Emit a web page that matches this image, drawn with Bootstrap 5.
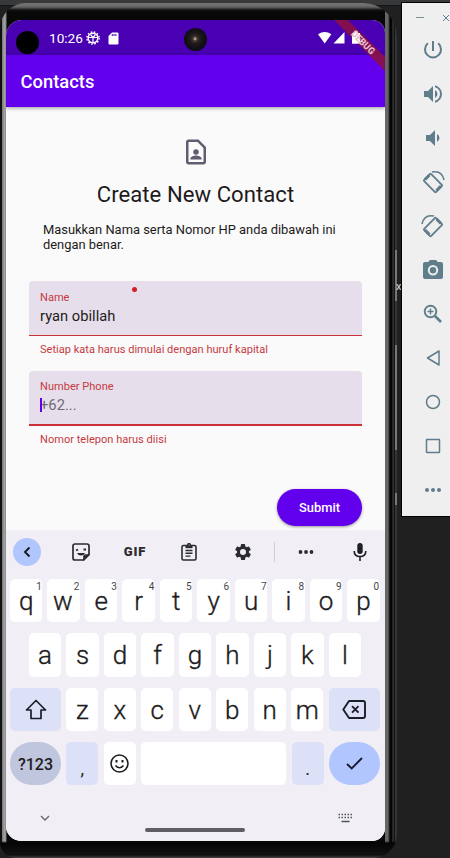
<!DOCTYPE html>
<html lang="id">
<head>
<meta charset="utf-8">
<meta name="viewport" content="width=device-width, initial-scale=1">
<title>Contacts</title>
<link href="https://cdn.jsdelivr.net/npm/bootstrap@5.3.0/dist/css/bootstrap.min.css" rel="stylesheet">
<style>
body{background:#202021;font-family:Roboto,"Liberation Sans",sans-serif;width:450px;height:858px;overflow:hidden;color:#1d1b20}
svg{display:block;flex:none}
.desk{height:858px;background:linear-gradient(#38393b 0 5px,#151515 5px 6px,#202021 6px)}
.phone{width:397px;height:855px;margin-top:3px;padding:17px 12px 17px 6px;border-radius:26px 34px 24px 16px;
 background:linear-gradient(#777 0,#646464 4px,#111 7px,transparent 9px),linear-gradient(0deg,#444 0,#111 3px,#050505 15px,transparent 17px),linear-gradient(90deg,#111 0 1.5px,#777 2px,#aaa 5px,#777 6px,#080808 7px 385px,#666 385px 388px,#333 389px,#050505 390px 392px,#444 393px,#151515 394px 395px,#555 396px,#111 397px)}
.screen{width:379px;height:821px;border-radius:16px 13px 13px 15px;background:#fafafa}
.statusbar{height:35px;background:#4800b2;color:#fff;padding:1px 0 0 10px;font-size:13.6px}
.lens{width:23px;height:23px;background:#000}
.clock{margin-left:10px;width:33px}
.status-end{width:25px}
.cam{left:178px;top:8px;width:23px;height:23px;background:radial-gradient(circle at 48% 47%,#a6988c 0 1px,#463832 2px,#201b1b 5px,#100d14 10px)}
.ribbon{top:0;right:0;width:54px;height:54px}
.appbar-top{height:52px;background:#6200ee;color:#fff;font-size:18.4px;font-weight:500;padding:2px 0 0 14.5px;box-shadow:0 1px 4px #0006}
.form-area{height:423px;padding:30px 23px 0}
.headline{font-size:22.1px;line-height:26px;margin-top:14px;letter-spacing:.05px}
.intro{font-size:12.9px;line-height:14.5px;margin:16px 0 0 14px}
.tfield{height:55px;background:#e6dfeb;border-radius:4px 4px 0 0;border-bottom:1px solid #cb2f38;padding:10px 11px 0}
.tfield-first{margin-top:29px}
.tfield-second{margin-top:15px;border-bottom-width:2px;padding-top:9px}
.flabel,.ferror{font-size:11.05px;line-height:13px;color:#c53a43;letter-spacing:.01px}
.fvalue{font-size:14.7px;line-height:18px;letter-spacing:.02px;margin-top:3px}
.ferror{padding:7px 11px 0}
.caret{width:2px;height:14px;background:#6200ee;margin-right:-2px;z-index:1}
.hint{color:#6f6975}
.reddot{left:103px;top:6px;width:5px;height:5px;background:#d11e28}
.submit-row{margin-top:43px}
.btn-submit,.btn-submit:hover{--bs-btn-padding-y:0;width:85px;height:37px;background:#6200ee;color:#fff;font-size:12.9px;font-weight:500;box-shadow:0 1px 3px #0006}
.kbd-area{height:311px;background:#f1eff5;padding:0 5px 0 4px}
.tools{height:43px;width:384px;margin-left:-10px}
.tool{flex:0 0 54px;display:flex;align-items:center;justify-content:center}
.tool-line{flex:0 0 1px;height:20px;margin-right:5px;background:#cfcdd4}
.tool-back{width:28px;height:28px;background:#b1c5ff}
.gif{font-size:13px;line-height:1;font-weight:900;letter-spacing:.8px;color:#2b2b30}
.keyrow{gap:5.2px;height:43.4px;margin-bottom:10.9px}
.keyrow-first{margin-top:6px}
.key{flex:0 0 32.3px;background:#fff;border-radius:5px;font-size:26px;font-weight:300;line-height:44.5px;text-align:center;-webkit-text-stroke:.35px #1d1b20}
.key sup{right:.5px;top:3px;font-size:10px;font-weight:400;line-height:1;color:#46464c;-webkit-text-stroke:0}
.key-w{padding-right:1.5px}
.key-wide{flex-basis:51px}
.key-tone{background:#dde1f8}
.key-num{background:#bfc6de;border-radius:22px;font-size:16px;font-weight:500;line-height:45px;-webkit-text-stroke:0}
.key-ok{background:#b1c5ff;border-radius:22px}
.key-low{font-size:18px;font-weight:400;line-height:53px;-webkit-text-stroke:0}
.navrow{padding:17px 27px 0 30px}
.homebar{width:100px;height:3.5px;background:#605e63;margin-top:5px}
.emu{width:49px;height:515px;margin:2px 0 0 4px;background:#efefef;border:solid #000;border-width:1px 0 1px 1px;color:#607d8b}
.emu-top{height:27px;padding:12px 0 0 14px;gap:18px}
.emu-list{gap:20px;padding:8px 0 0 19px}
.side-btn{left:395px;width:2px;background:#777}
.side-b1{top:250px;height:51px}
.side-b2{top:345px;height:105px}
.side-b3{top:493px;height:12px}
.side-x{left:396px;top:280px;font-size:11px;line-height:13px;width:5px;color:#ddd}
</style>
<script src="https://cdn.jsdelivr.net/npm/bootstrap@5.3.0/dist/js/bootstrap.bundle.min.js"></script>
</head>
<body>
<div class="desk d-flex align-items-start position-relative">
 <div class="phone flex-shrink-0">
  <div class="screen overflow-hidden d-flex flex-column position-relative">
   <div class="statusbar d-flex align-items-center">
    <div class="lens rounded-circle mt-2"></div>
    <span class="clock">10:26</span>
    <svg class="ms-1" width="14" height="14" viewBox="0 0 14 14" fill="none" stroke="#fff"><circle cx="7" cy="7" r="4.800" stroke-width="1.500"/><circle cx="7" cy="7" r="6.100" stroke-width="1.400" stroke-dasharray="1.600 1.600"/><path d="M2.500 6.500h9M7 6.500v5M4.500 3.500 7 6.500l2.500-3" stroke-width="1.200"/></svg>
    <svg class="ms-2" width="11" height="13" viewBox="0 0 11 13"><path d="M4 .5h5.500q1 0 1 1v10q0 1-1 1h-8q-1 0-1-1V4z" fill="#fff"/><path d="M4.300 2v2M6.100 2v2M7.900 2v2" stroke="#4800b2"/></svg>
    <svg class="ms-auto" width="42" height="14" viewBox="0 0 42 14" fill="#fff"><path d="M0 3.200Q6.700-1.400 13.400 3.200L6.700 12.500zM15.500 12.500 26.500 1v11.500zM34 2h2V.5h4V2h2v10.500h-8z"/></svg>
    <div class="status-end"></div>
   </div>
   <div class="cam rounded-circle position-absolute"></div>
   <div class="appbar-top d-flex align-items-center">Contacts</div>
   <svg class="ribbon position-absolute" viewBox="0 0 54 54"><path d="M3 0h14l37 37v14z" fill="#8b1145" fill-opacity=".9"/><path d="M21 13h2V11.500h4V13h2v10.500h-8z" fill="#fff"/><text transform="translate(19.500 14.500) rotate(45)" font-size="9.600" font-weight="900" fill="#e3bccb" textLength="29" lengthAdjust="spacingAndGlyphs">DEBUG</text></svg>

   <div class="form-area">
    <svg class="mx-auto" width="30" height="30" viewBox="0 0 24 24" fill="#625b71"><path d="M14 2H6c-1.100 0-2 .9-2 2v16c0 1.100.9 2 2 2h12c1.100 0 2-.9 2-2V8zm4 18H6V4h7.200L18 8.800z"/><circle cx="12" cy="12" r="2.200"/><path d="M7.500 18v-.7c0-1.800 3-2.500 4.500-2.500s4.500.7 4.500 2.500v.7z"/></svg>
    <div class="headline text-center">Create New Contact</div>
    <p class="intro">Masukkan Nama serta Nomor HP anda dibawah ini<br>dengan benar.</p>
    <div class="tfield tfield-first position-relative">
     <div class="flabel">Name</div><div class="fvalue">ryan obillah</div>
     <span class="reddot rounded-circle position-absolute"></span>
    </div>
    <div class="ferror">Setiap kata harus dimulai dengan huruf kapital</div>
    <div class="tfield tfield-second">
     <div class="flabel">Number Phone</div><div class="fvalue hint d-flex align-items-center"><span class="caret"></span>+62...</div>
    </div>
    <div class="ferror">Nomor telepon harus diisi</div>
    <div class="submit-row d-flex justify-content-end"><button class="btn btn-submit rounded-pill" type="button">Submit</button></div>
   </div>

   <div class="kbd-area position-relative flex-shrink-0">
    <div class="tools d-flex align-items-center">
     <div class="tool"><div class="tool-back rounded-circle d-flex align-items-center justify-content-center"><svg width="8" height="12" viewBox="0 0 8 12" fill="none" stroke="#1b1b25" stroke-width="2"><path d="M6.500 1.500 2 6l4.500 4.500"/></svg></div></div>
     <div class="tool"><svg width="18" height="18" viewBox="0 0 18 18" fill="none" stroke="#2b2b30" stroke-width="1.700"><path d="M3 1h12q2 0 2 2v8.500L11.500 17H3q-2 0-2-2V3q0-2 2-2z"/><path d="M16.500 12H14q-2 0-2 2v2.500z" fill="#2b2b30"/><path d="M4 7.500l2-1M11.500 6.500h2.500" stroke-width="1.800"/><path d="M5 10h8q-1 2.600-4 2.600T5 10z" fill="#2b2b30" stroke="none"/></svg></div>
     <div class="tool gif">GIF</div>
     <div class="tool"><svg width="16" height="18" viewBox="0 0 16 18" fill="none" stroke="#2b2b30" stroke-width="1.600"><rect x="1" y="2.500" width="14" height="14.500" rx="1.500"/><path d="M4.500 7.500h7M4.500 10.300h7M4.500 13.100h5" stroke-width="1.400"/><path d="M4.500 2h7v3.200h-7z" fill="#2b2b30" stroke="none"/><circle cx="8" cy="2" r="1.300" fill="#f1eff5"/></svg></div>
     <div class="tool"><svg width="20" height="20" viewBox="0 0 24 24" fill="#2b2b30"><path d="M19.140 12.940c.04-.3.060-.61.060-.94s-.02-.64-.07-.94l2.030-1.580a.49.49 0 0 0 .12-.61l-1.920-3.320a.49.49 0 0 0-.59-.22l-2.390.96a7 7 0 0 0-1.620-.94l-.36-2.540a.48.48 0 0 0-.48-.41h-3.840a.48.48 0 0 0-.47.41l-.36 2.540c-.59.24-1.130.57-1.620.94l-2.390-.96a.48.48 0 0 0-.59.22L2.740 8.870a.48.48 0 0 0 .12.610l2.030 1.580a6 6 0 0 0 0 1.880l-2.030 1.580a.49.49 0 0 0-.12.610l1.920 3.320c.12.220.37.290.59.220l2.390-.96c.5.380 1.030.7 1.620.94l.36 2.540c.05.240.24.410.48.410h3.840c.24 0 .44-.17.47-.41l.36-2.540a7 7 0 0 0 1.620-.94l2.390.96c.22.080.47 0 .59-.22l1.920-3.320a.48.48 0 0 0-.12-.61zM12 15.600a3.600 3.600 0 1 1 0-7.200 3.600 3.600 0 0 1 0 7.200z"/></svg></div>
     <div class="tool-line ms-1 me-1"></div>
     <div class="tool"><svg width="16" height="4" viewBox="0 0 16 4" fill="#2b2b30"><circle cx="2.500" cy="2" r="1.900"/><circle cx="8" cy="2" r="1.900"/><circle cx="13.500" cy="2" r="1.900"/></svg></div>
     <div class="tool"><svg width="14" height="18" viewBox="0 0 14 18"><rect x="4.300" y="0" width="5.400" height="11" rx="2.700" fill="#1f1f23"/><path d="M1.200 8q0 5.500 5.800 5.500T12.800 8M7 13.500V18" fill="none" stroke="#1f1f23" stroke-width="1.600"/></svg></div>
    </div>
    <div class="keyrow keyrow-first d-flex">
     <div class="key position-relative">q<sup class="position-absolute">1</sup></div><div class="key key-w position-relative">w<sup class="position-absolute">2</sup></div><div class="key position-relative">e<sup class="position-absolute">3</sup></div><div class="key position-relative">r<sup class="position-absolute">4</sup></div><div class="key position-relative">t<sup class="position-absolute">5</sup></div><div class="key position-relative">y<sup class="position-absolute">6</sup></div><div class="key position-relative">u<sup class="position-absolute">7</sup></div><div class="key position-relative">i<sup class="position-absolute">8</sup></div><div class="key position-relative">o<sup class="position-absolute">9</sup></div><div class="key position-relative">p<sup class="position-absolute">0</sup></div>
    </div>
    <div class="keyrow d-flex justify-content-center">
     <div class="key">a</div><div class="key">s</div><div class="key">d</div><div class="key">f</div><div class="key">g</div><div class="key">h</div><div class="key">j</div><div class="key">k</div><div class="key">l</div>
    </div>
    <div class="keyrow d-flex">
     <div class="key key-wide key-tone d-flex align-items-center justify-content-center"><svg width="22" height="21" viewBox="0 0 22 21" fill="none" stroke="#1d1d28" stroke-width="1.700" stroke-linejoin="round"><path d="M11 1.500 1.500 11H6v8.500h10V11h4.500z"/></svg></div>
     <div class="key">z</div><div class="key">x</div><div class="key">c</div><div class="key">v</div><div class="key">b</div><div class="key">n</div><div class="key">m</div>
     <div class="key key-wide key-tone d-flex align-items-center justify-content-center"><svg width="24" height="19" viewBox="0 0 24 19" fill="none" stroke="#1d1d28" stroke-width="1.900" stroke-linejoin="round"><path d="M7 1h14q2 0 2 2v13q0 2-2 2H7L1.300 9.500zM10 6.200l6.500 6.500M16.500 6.200 10 12.700"/></svg></div>
    </div>
    <div class="keyrow d-flex">
     <div class="key key-wide key-num">?123</div>
     <div class="key key-tone key-low">,</div>
     <div class="key d-flex align-items-center justify-content-center"><svg width="19" height="19" viewBox="0 0 19 19" fill="none" stroke="#1d1b20" stroke-width="1.600"><circle cx="9.500" cy="9.500" r="8.500"/><path d="M5.500 11.500q4 4.600 8 0"/><path d="M6.500 6v2.400M12.500 6v2.400" stroke-width="2"/></svg></div>
     <div class="key flex-grow-1"></div>
     <div class="key key-tone key-low">.</div>
     <div class="key key-wide key-ok d-flex align-items-center justify-content-center"><svg width="17" height="13" viewBox="0 0 17 13" fill="none" stroke="#1b1b30" stroke-width="1.900"><path d="M1 7l4.700 4.500L16 1"/></svg></div>
    </div>
    <div class="navrow d-flex justify-content-between align-items-center">
     <svg width="10" height="7" viewBox="0 0 10 7" fill="none" stroke="#66646a" stroke-width="1.300"><path d="M1 1l4 4 4-4"/></svg>
     <svg width="15" height="10" viewBox="0 0 15 10" fill="none" stroke="#55535a" stroke-width="1.400"><path d="M.5 1.500h14M.5 4.500h14" stroke-dasharray="1.500 1.500"/><path d="M3.500 8.500h8"/></svg>
    </div>
    <div class="homebar rounded-pill mx-auto"></div>
   </div>
  </div>
 </div>
 <div class="emu flex-shrink-0">
  <div class="emu-top d-flex">
   <svg width="8" height="7" viewBox="0 0 8 7" stroke="#7e9099"><path d="M0 2.500h8"/></svg>
   <svg width="8" height="7" viewBox="0 0 8 7" stroke="#607d8b"><path d="M1 0l6 6M7 0 1 6"/></svg>
  </div>
  <div class="emu-list d-flex flex-column">
   <svg width="24" height="24" viewBox="0 0 24 24" fill="none" stroke="#607d8b" stroke-width="2"><path d="M12 3v10M6.800 5.300a8 8 0 1 0 10.400 0"/></svg>
   <svg width="24" height="24" viewBox="0 0 24 24" fill="#607d8b"><path d="M3 9v6h4l5 5V4L7 9zm13.500 3A4.500 4.500 0 0 0 14 7.970v8.050A4.500 4.500 0 0 0 16.500 12zM14 3.230v2.060a7 7 0 0 1 0 13.420v2.060a9 9 0 0 0 0-17.540z"/></svg>
   <svg width="24" height="24" viewBox="0 0 24 24" fill="#607d8b"><path d="M18.500 12A4.500 4.500 0 0 0 16 7.970v8.050A4.500 4.500 0 0 0 18.500 12zM5 9v6h4l5 5V4L9 9z"/></svg>
   <svg width="24" height="24" viewBox="0 0 24 24" fill="none" stroke="#607d8b" stroke-width="1.800"><rect x="3.500" y="8" width="17" height="10" rx="1" transform="rotate(45 12 13)"/><path d="M4 9.500 8.500 5M15.500 20.500 20 16" stroke-width="3"/><path d="M11 2q10-2 12 8" stroke-width="1.500"/></svg>
   <svg width="24" height="24" viewBox="0 0 24 24" fill="none" stroke="#607d8b" stroke-width="1.800"><rect x="3.500" y="8" width="17" height="10" rx="1" transform="rotate(-45 12 13)"/><path d="M20 9.500 15.500 5M8.500 20.500 4 16" stroke-width="3"/><path d="M13 2Q3 0 1 10" stroke-width="1.500"/></svg>
   <svg width="24" height="24" viewBox="0 0 24 24" fill="#607d8b"><path d="M9 2 7.200 4H4c-1.100 0-2 .9-2 2v13c0 1.100.9 2 2 2h16c1.100 0 2-.9 2-2V6c0-1.100-.9-2-2-2h-3.200L15 2z"/><circle cx="12" cy="12.300" r="4.200" fill="none" stroke="#efefef" stroke-width="2"/></svg>
   <svg width="24" height="24" viewBox="0 0 24 24" fill="none" stroke="#607d8b" stroke-width="1.900"><circle cx="9.500" cy="9.500" r="5.800"/><path d="M14 14l6 6" stroke-width="2.600"/><path d="M9.500 6.500v6M6.500 9.500h6" stroke-width="1.400"/></svg>
   <svg width="24" height="24" viewBox="0 0 24 24" fill="none" stroke="#607d8b" stroke-width="1.500" stroke-linejoin="round"><path d="M18 5v14L6.500 12z"/></svg>
   <svg width="24" height="24" viewBox="0 0 24 24" fill="none" stroke="#607d8b" stroke-width="1.500"><circle cx="12" cy="12" r="6.500"/></svg>
   <svg width="24" height="24" viewBox="0 0 24 24" fill="none" stroke="#607d8b" stroke-width="1.500"><rect x="5.500" y="5.500" width="13" height="13" rx=".5"/></svg>
   <svg width="24" height="24" viewBox="0 0 24 24" fill="#607d8b"><circle cx="6" cy="12" r="2"/><circle cx="12" cy="12" r="2"/><circle cx="18" cy="12" r="2"/></svg>
  </div>
 </div>
 <span class="side-btn side-b1 position-absolute"></span>
 <span class="side-btn side-b2 position-absolute"></span>
 <span class="side-btn side-b3 position-absolute"></span>
 <span class="side-x position-absolute overflow-hidden">x</span>
</div>
</body>
</html>
